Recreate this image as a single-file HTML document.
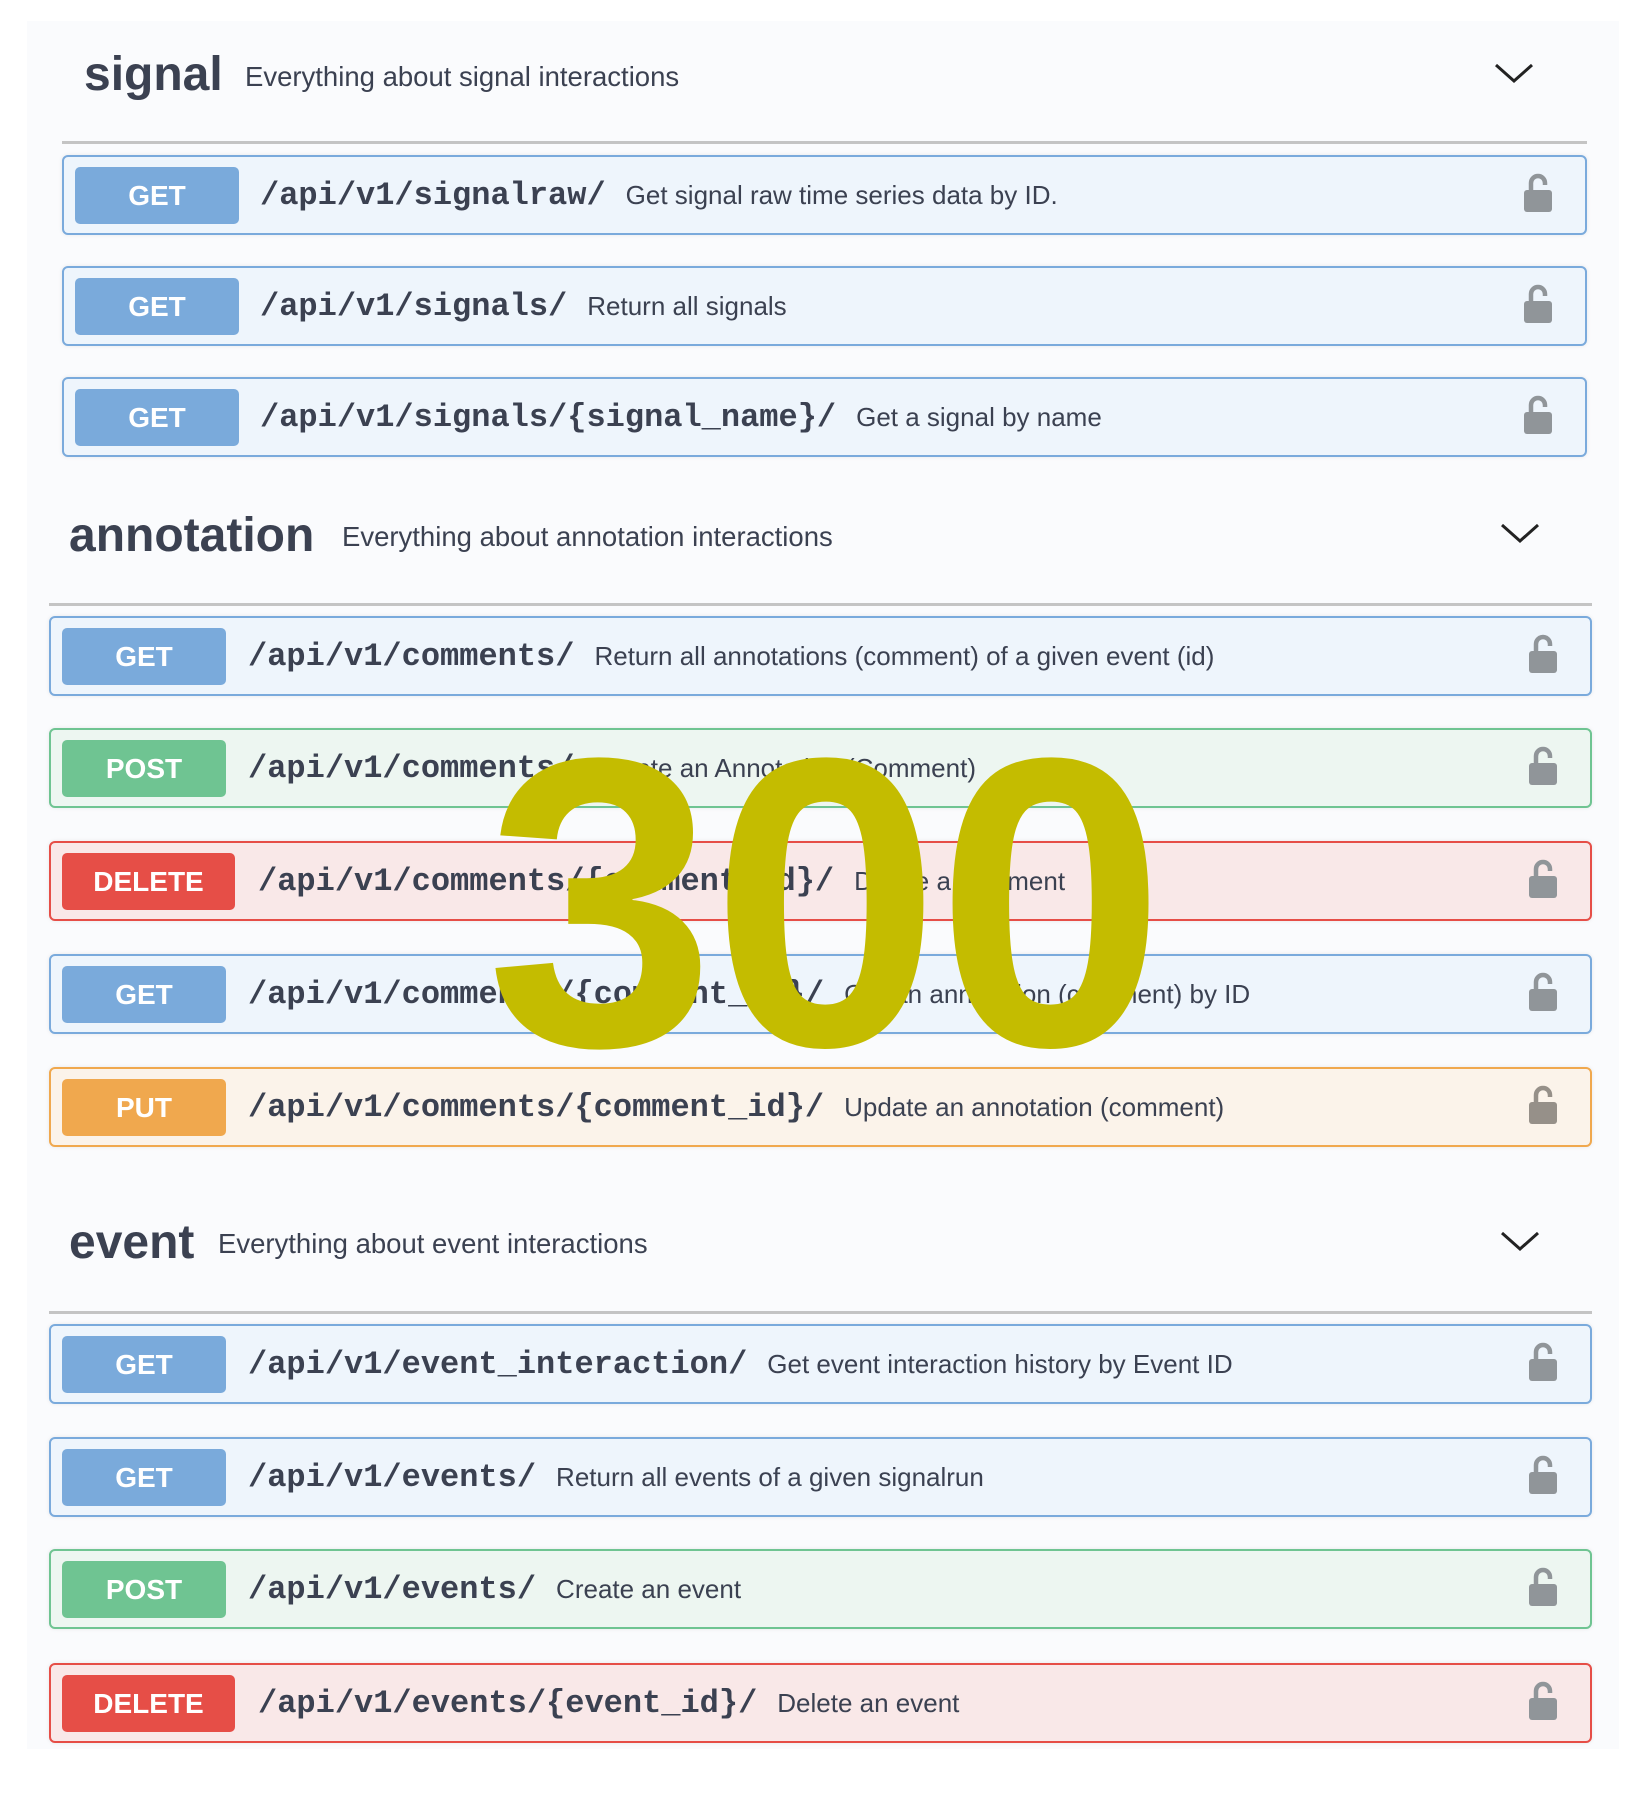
<!DOCTYPE html>
<html><head><meta charset="utf-8">
<style>
*{margin:0;padding:0;box-sizing:border-box}
body{width:1646px;height:1794px;background:#fff;position:relative;overflow:hidden;font-family:"Liberation Sans",Arial,sans-serif;color:#3b4151}
.panel{position:absolute;left:27px;top:21px;width:1592px;height:1728px;background:#fafbfd}
.h{position:absolute;font-weight:bold;font-size:48px;line-height:1;color:#3b4151}
.hd{position:absolute;font-size:27.5px;line-height:1;color:#3b4151}
.hr{position:absolute;height:3px;background:#c4c4c4}
.chev{position:absolute;width:40px;height:24px}
.row{position:absolute;height:80px;border:2px solid;border-radius:6px;box-shadow:0 0 4px rgba(0,0,0,.08)}
.get{border-color:#7aaadc;background:#eef5fc}
.post{border-color:#6fc492;background:#edf6f1}
.del{border-color:#e64e47;background:#f9e8e8}
.put{border-color:#f0a84e;background:#fbf3ea}
.b{position:absolute;left:11px;top:10px;height:57px;width:164px;border-radius:5px;color:#fff;font-weight:bold;font-size:28px;text-align:center;line-height:57px}
.get .b{background:#7aaadb}.post .b{background:#6fc492}.del .b{background:#e64e47;width:173px}.put .b{background:#f0a84e}
.p{position:absolute;top:0;line-height:76px;font-family:"Liberation Mono",monospace;font-weight:bold;font-size:32px;color:#3b4151;white-space:nowrap}
.p span{font-family:"Liberation Sans",Arial,sans-serif;font-weight:normal;font-size:26px;margin-left:20px}
.lock{position:absolute;right:32px;top:16px;width:30px;height:40px}
.big{position:absolute;left:486px;top:697px;font-size:412px;font-weight:bold;line-height:1;color:#c4bc00;letter-spacing:-4px}
</style></head><body>
<div class="panel"></div>

<div class="h" style="left:84px;top:51px">signal</div>
<div class="hd" style="left:245px;top:63px">Everything about signal interactions</div>
<svg class="chev" style="left:1494px;top:62px" viewBox="0 0 40 24"><path d="M2 3 L20 19 L38 3" fill="none" stroke="#222" stroke-width="3"/></svg>
<div class="hr" style="left:62px;top:141px;width:1525px"></div>

<div class="row get" style="left:62px;top:155px;width:1525px"><div class="b">GET</div><div class="p" style="left:196px">/api/v1/signalraw/<span>Get signal raw time series data by ID.</span></div><svg class="lock" viewBox="0 0 30 40"><path d="M8 18 V10 a7 7 0 0 1 14 0 V12" fill="none" stroke="#909599" stroke-width="4.5"/><rect x="1" y="17" width="28" height="22" rx="3" fill="#909599"/></svg></div>
<div class="row get" style="left:62px;top:266px;width:1525px"><div class="b">GET</div><div class="p" style="left:196px">/api/v1/signals/<span>Return all signals</span></div><svg class="lock" viewBox="0 0 30 40"><path d="M8 18 V10 a7 7 0 0 1 14 0 V12" fill="none" stroke="#909599" stroke-width="4.5"/><rect x="1" y="17" width="28" height="22" rx="3" fill="#909599"/></svg></div>
<div class="row get" style="left:62px;top:377px;width:1525px"><div class="b">GET</div><div class="p" style="left:196px">/api/v1/signals/{signal_name}/<span>Get a signal by name</span></div><svg class="lock" viewBox="0 0 30 40"><path d="M8 18 V10 a7 7 0 0 1 14 0 V12" fill="none" stroke="#909599" stroke-width="4.5"/><rect x="1" y="17" width="28" height="22" rx="3" fill="#909599"/></svg></div>

<div class="h" style="left:69px;top:512px">annotation</div>
<div class="hd" style="left:342px;top:523px">Everything about annotation interactions</div>
<svg class="chev" style="left:1500px;top:522px" viewBox="0 0 40 24"><path d="M2 3 L20 19 L38 3" fill="none" stroke="#222" stroke-width="3"/></svg>
<div class="hr" style="left:49px;top:603px;width:1543px"></div>

<div class="row get" style="left:49px;top:616px;width:1543px"><div class="b">GET</div><div class="p" style="left:197px">/api/v1/comments/<span>Return all annotations (comment) of a given event (id)</span></div><svg class="lock" viewBox="0 0 30 40"><path d="M8 18 V10 a7 7 0 0 1 14 0 V12" fill="none" stroke="#909599" stroke-width="4.5"/><rect x="1" y="17" width="28" height="22" rx="3" fill="#909599"/></svg></div>
<div class="row post" style="left:49px;top:728px;width:1543px"><div class="b">POST</div><div class="p" style="left:197px">/api/v1/comments/<span>Create an Annotation (Comment)</span></div><svg class="lock" viewBox="0 0 30 40"><path d="M8 18 V10 a7 7 0 0 1 14 0 V12" fill="none" stroke="#909599" stroke-width="4.5"/><rect x="1" y="17" width="28" height="22" rx="3" fill="#909599"/></svg></div>
<div class="row del" style="left:49px;top:841px;width:1543px"><div class="b">DELETE</div><div class="p" style="left:207px">/api/v1/comments/{comment_id}/<span>Delete a comment</span></div><svg class="lock" viewBox="0 0 30 40"><path d="M8 18 V10 a7 7 0 0 1 14 0 V12" fill="none" stroke="#909599" stroke-width="4.5"/><rect x="1" y="17" width="28" height="22" rx="3" fill="#909599"/></svg></div>
<div class="row get" style="left:49px;top:954px;width:1543px"><div class="b">GET</div><div class="p" style="left:197px">/api/v1/comments/{comment_id}/<span>Get an annotation (comment) by ID</span></div><svg class="lock" viewBox="0 0 30 40"><path d="M8 18 V10 a7 7 0 0 1 14 0 V12" fill="none" stroke="#909599" stroke-width="4.5"/><rect x="1" y="17" width="28" height="22" rx="3" fill="#909599"/></svg></div>
<div class="row put" style="left:49px;top:1067px;width:1543px"><div class="b">PUT</div><div class="p" style="left:197px">/api/v1/comments/{comment_id}/<span>Update an annotation (comment)</span></div><svg class="lock" viewBox="0 0 30 40"><path d="M8 18 V10 a7 7 0 0 1 14 0 V12" fill="none" stroke="#969089" stroke-width="4.5"/><rect x="1" y="17" width="28" height="22" rx="3" fill="#969089"/></svg></div>

<div class="h" style="left:69px;top:1219px">event</div>
<div class="hd" style="left:218px;top:1230px">Everything about event interactions</div>
<svg class="chev" style="left:1500px;top:1230px" viewBox="0 0 40 24"><path d="M2 3 L20 19 L38 3" fill="none" stroke="#222" stroke-width="3"/></svg>
<div class="hr" style="left:49px;top:1311px;width:1543px"></div>

<div class="row get" style="left:49px;top:1324px;width:1543px"><div class="b">GET</div><div class="p" style="left:197px">/api/v1/event_interaction/<span>Get event interaction history by Event ID</span></div><svg class="lock" viewBox="0 0 30 40"><path d="M8 18 V10 a7 7 0 0 1 14 0 V12" fill="none" stroke="#909599" stroke-width="4.5"/><rect x="1" y="17" width="28" height="22" rx="3" fill="#909599"/></svg></div>
<div class="row get" style="left:49px;top:1437px;width:1543px"><div class="b">GET</div><div class="p" style="left:197px">/api/v1/events/<span>Return all events of a given signalrun</span></div><svg class="lock" viewBox="0 0 30 40"><path d="M8 18 V10 a7 7 0 0 1 14 0 V12" fill="none" stroke="#909599" stroke-width="4.5"/><rect x="1" y="17" width="28" height="22" rx="3" fill="#909599"/></svg></div>
<div class="row post" style="left:49px;top:1549px;width:1543px"><div class="b">POST</div><div class="p" style="left:197px">/api/v1/events/<span>Create an event</span></div><svg class="lock" viewBox="0 0 30 40"><path d="M8 18 V10 a7 7 0 0 1 14 0 V12" fill="none" stroke="#909599" stroke-width="4.5"/><rect x="1" y="17" width="28" height="22" rx="3" fill="#909599"/></svg></div>
<div class="row del" style="left:49px;top:1663px;width:1543px"><div class="b">DELETE</div><div class="p" style="left:207px">/api/v1/events/{event_id}/<span>Delete an event</span></div><svg class="lock" viewBox="0 0 30 40"><path d="M8 18 V10 a7 7 0 0 1 14 0 V12" fill="none" stroke="#909599" stroke-width="4.5"/><rect x="1" y="17" width="28" height="22" rx="3" fill="#909599"/></svg></div>

<div class="big">300</div>
</body></html>
